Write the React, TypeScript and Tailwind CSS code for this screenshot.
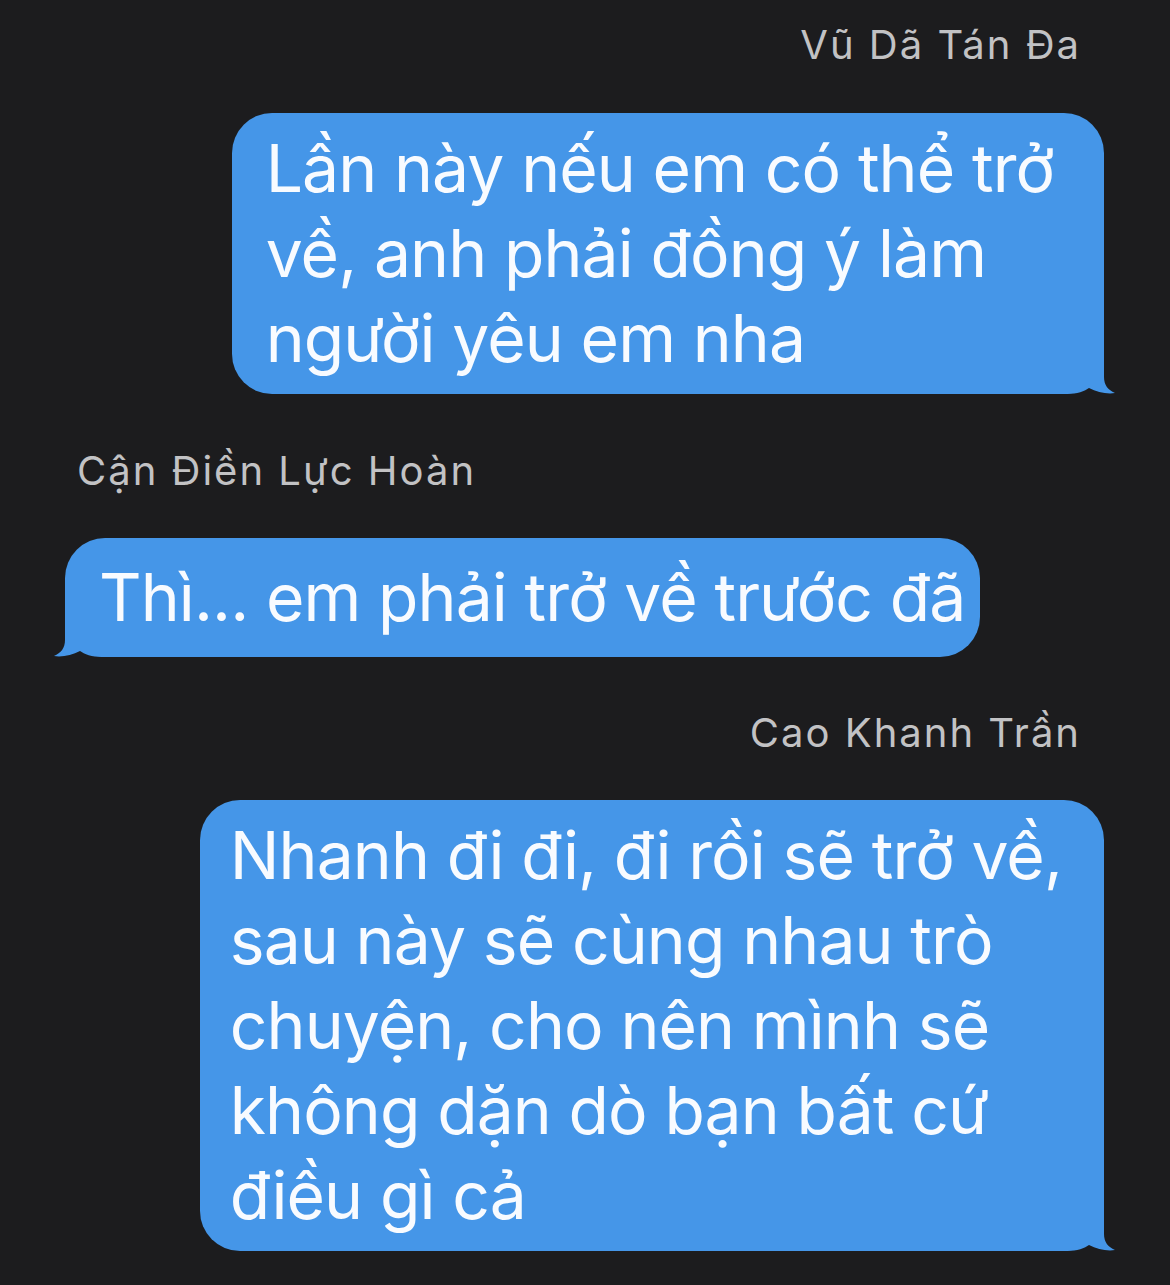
import React from "react";

function Tail({ side }: { side: "left" | "right" }) {
  return (
    <svg
      width="57"
      height="46"
      viewBox="0 0 57 46"
      className={
        side === "right"
          ? "absolute right-[-12px] bottom-[-1px]"
          : "absolute left-[-12px] bottom-[-1px] -scale-x-100"
      }
    >
      <path
        d="M0,0 H45 V28 C45,36 49,41 56,44 C48,45.5 38,43 30,39 C26,42 18,45 8,45 H0 Z"
        fill="#4596e8"
      />
    </svg>
  );
}

function Bubble({
  side,
  lines,
  className,
}: {
  side: "left" | "right";
  lines: string[];
  className?: string;
}) {
  return (
    <div
      className={
        "relative w-fit rounded-[40px] bg-[#4596e8] text-[66px] leading-[85px] tracking-[-0.9px] text-[#f8fbff] " +
        (className ?? "")
      }
    >
      {lines.map((l, i) => (
        <div key={i} className="whitespace-nowrap">
          {l}
        </div>
      ))}
      <Tail side={side} />
    </div>
  );
}

export default function App() {
  return (
    <div
      className="min-h-[1285px] w-[1170px] bg-[#1c1c1e] pt-[21px] text-white"
      style={{ fontFamily: "Inter, 'Noto Sans', sans-serif" }}
    >
      <div className="flex flex-col">
        <div className="self-end pr-[89px] text-[40px] leading-[48px] tracking-[2px] text-[#c2c2c4]">
          Vũ Dã Tán Đa
        </div>
        <div className="mt-[44px] self-end pr-[66px]">
          <Bubble
            side="right"
            className="pl-[34px] pr-[50px] py-[13px]"
            lines={["Lần này nếu em có thể trở", "về, anh phải đồng ý làm", "người yêu em nha"]}
          />
        </div>
        <div className="mt-[53px] self-start pl-[77px] text-[40px] leading-[48px] tracking-[2px] text-[#c2c2c4]">
          Cận Điền Lực Hoàn
        </div>
        <div className="mt-[43px] self-start pl-[65px]">
          <Bubble
            side="left"
            lines={["Thì... em phải trở về trước đã"]}
            className="pl-[34px] pr-[15px] py-[17px]"
          />
        </div>
        <div className="mt-[52px] self-end pr-[89px] text-[40px] leading-[48px] tracking-[2px] text-[#c2c2c4]">
          Cao Khanh Trần
        </div>
        <div className="mt-[43px] self-end pr-[66px]">
          <Bubble
            side="right"
            className="pl-[30px] pr-[42px] py-[13px]"
            lines={[
              "Nhanh đi đi, đi rồi sẽ trở về,",
              "sau này sẽ cùng nhau trò",
              "chuyện, cho nên mình sẽ",
              "không dặn dò bạn bất cứ",
              "điều gì cả",
            ]}
          />
        </div>
      </div>
    </div>
  );
}
